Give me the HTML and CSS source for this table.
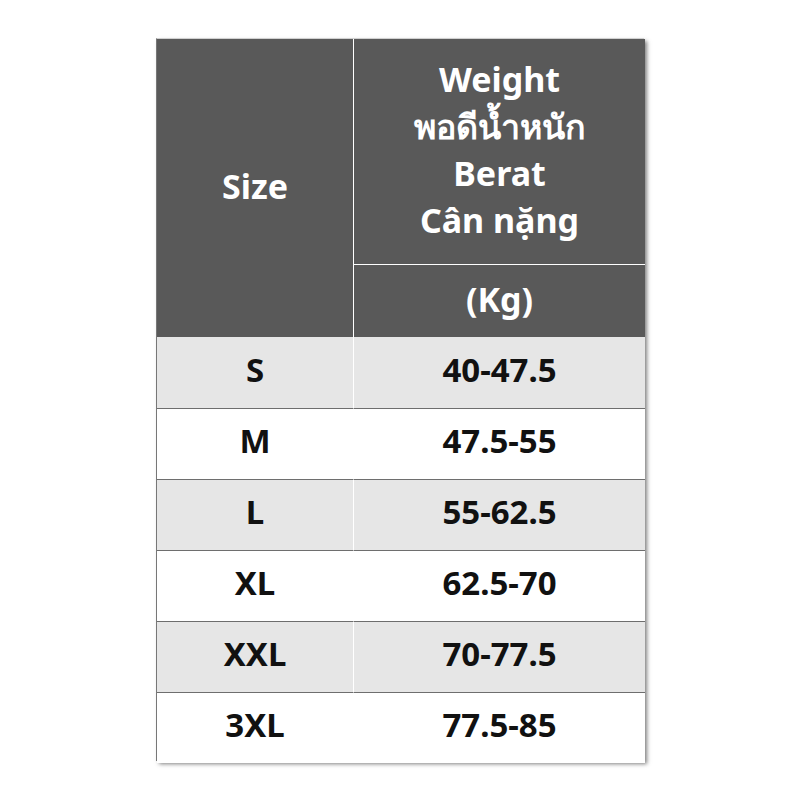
FILE: index.html
```html
<!DOCTYPE html>
<html>
<head>
<meta charset="utf-8">
<link rel="stylesheet" href="styles.css">
</head>
<body>
<div class="page">
  <div class="chart">
    <div class="hd size-hd">Size</div>
    <div class="hd weight-hd">Weight<br>พอดีน้ำหนัก<br>Berat<br>Cân nặng</div>
    <div class="hd unit-hd">(Kg)</div>
    <div class="c l g">S</div><div class="c r g">40-47.5</div>
    <div class="c l">M</div><div class="c r">47.5-55</div>
    <div class="c l g">L</div><div class="c r g">55-62.5</div>
    <div class="c l">XL</div><div class="c r">62.5-70</div>
    <div class="c l g">XXL</div><div class="c r g">70-77.5</div>
    <div class="c l last">3XL</div><div class="c r last">77.5-85</div>
  </div>
</div>
</body>
</html>
```
FILE: styles.css
```css
html, body { margin: 0; padding: 0; background: #fff; }
.page { width: 800px; height: 800px; display: flex; justify-content: center; padding-top: 38px; box-sizing: border-box; }
.chart {
  display: grid;
  grid-template-columns: 197px 291px;
  grid-template-rows: 226px 72px repeat(6, 71px);
  width: 488px;
  height: 723px;
  border-top: 1px solid #d0d0d0;
  border-left: 1px solid #777;
  box-shadow: 3px 3px 4px rgba(0,0,0,0.5);
  font-family: "Noto Sans", "Segoe UI", sans-serif;
  font-weight: bold;
  box-sizing: border-box;
}
.hd { background: #595959; color: #fff; display: flex; align-items: center; justify-content: center; text-align: center; font-size: 34px; }
.size-hd { grid-row: 1 / 3; grid-column: 1; border-right: 1px solid #fff; padding-bottom: 4px; }
.weight-hd { grid-row: 1; grid-column: 2; line-height: 47px; border-bottom: 1px solid #fff; padding-bottom: 4px; }
.unit-hd { grid-row: 2; grid-column: 2; padding-bottom: 4px; }
.c { display: flex; align-items: center; justify-content: center; font-size: 33px; color: #111; background: #fff; border-top: 1px solid #6e6e6e; padding-bottom: 7px; }
.c.g { background: #e6e6e6; }
.c.l { border-right: 1px solid #fff; }
.c.g:nth-child(4) { border-top: none; }
.c.r.g:nth-child(5) { border-top: none; }
```
